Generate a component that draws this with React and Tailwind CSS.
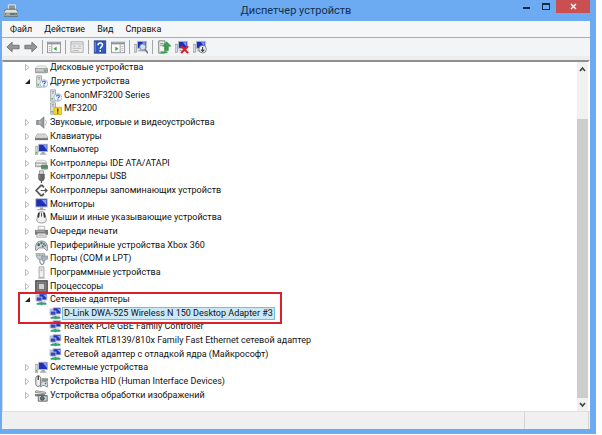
import React from "react";

function Icon({ children, className = "h-[13px] w-[13px]" }) {
  return (
    <svg viewBox="0 0 16 16" className={`${className} shrink-0`} fill="none" aria-hidden="true">
      {children}
    </svg>
  );
}

const Disk = () => (
  <Icon>
    <path d="M3 6h10l3 4H0z" fill="#f1f1f1" stroke="#aaa" strokeWidth=".7" />
    <rect x="0" y="9.500" width="15.500" height="5" rx="1" fill="#b9b9b9" stroke="#777" strokeWidth=".8" />
    <path d="M1.500 11h9" stroke="#eee" />
    <rect x="11.500" y="11.500" width="2.500" height="1.500" fill="#41a84c" />
  </Icon>
);
const Unknown = ({ warn }) => (
  <Icon>
    <path d="M2 1h6v14H2z" fill="#e2e4e4" stroke="#979d9d" />
    <path d="M3.500 3h3M3.500 5h3" stroke="#8a9190" />
    <rect x="3" y="11" width="2" height="2" fill="#58b063" />
    {warn ? (
      <path d="M6 6.500h9.500v9H6z" fill="#f6d62b" stroke="#b99a13" strokeWidth=".8" />
    ) : (
      <circle cx="11" cy="10.500" r="4.800" fill="#f2f6fd" stroke="#8b9fc4" strokeWidth=".8" />
    )}
    {warn ? (
      <path d="M10.800 8v4M10.800 13v1.500" stroke="#333" strokeWidth="1.500" />
    ) : (
      <path d="M9.300 9.200c0-2.400 3.600-2.300 3.400 0-.1 1.200-1.700 1.200-1.700 2.600M11 12.700v1.300" stroke="#2d58b5" strokeWidth="1.300" />
    )}
  </Icon>
);
const Speaker = () => (
  <Icon>
    <path d="M2 5.500h4L11 1v14l-5-4.500H2z" fill="#9a9da0" stroke="#66696c" strokeWidth=".8" />
    <path d="M6 5.500v5" stroke="#ddd" />
    <path d="M12.500 4.500c2 2 2 5 0 7" stroke="#aaa" />
  </Icon>
);
const Keyboard = () => (
  <Icon>
    <path d="M3 5h10l3 5H0z" fill="#ececec" stroke="#888" strokeWidth=".8" />
    <path d="M0 10h16v2.500H0z" fill="#777" />
    <path d="M3.500 6.500h9M2.500 8.200h11" stroke="#bbb" strokeDasharray="1.500 .6" />
  </Icon>
);
const Screen = ({ x = 4, y = 1, w = 11, h = 9 }) => (
  <>
    <rect x={x} y={y} width={w} height={h} fill="#1d30b8" stroke="#b9bccb" />
    <path d={`M${x + w / 2} ${y + 1}h${w / 2 - 1}v${h - 3}z`} fill="#7f9bf0" />
  </>
);
const Computer = () => (
  <Icon>
    <path d="M0 4h3.500v10H0z" fill="#d5d8d8" stroke="#858b8b" strokeWidth=".7" />
    <rect x="1" y="11" width="1.500" height="2" fill="#4eae58" />
    <Screen x={4.5} y={1.5} w={11} h={9} />
    <path d="M8 11h4v2h2v1.500H6V13h2z" fill="#a5a9b2" />
  </Icon>
);
const Ide = () => (
  <Icon>
    <path d="M3 4h9l3 3.500H0z" fill="#f1f1f1" stroke="#aaa" strokeWidth=".7" />
    <rect x="0" y="7.500" width="14" height="4.500" rx="1" fill="#c6c8c8" stroke="#7b7d7d" strokeWidth=".8" />
    <path d="M1.500 9h7" stroke="#fff" />
    <path d="M8 10.500h7.500v4H8z" fill="#4f8e6c" stroke="#37674c" strokeWidth=".7" />
    <path d="M9 15h6" stroke="#b8b27b" />
  </Icon>
);
const Usb = () => (
  <Icon>
    <path d="M5.500 1h5v4h-5z" fill="#ddd" stroke="#777" strokeWidth=".8" />
    <path d="M4 5h8v6l-2 2.500H6L4 11z" fill="#656565" />
    <path d="M8 13v3" stroke="#555" strokeWidth="1.600" />
    <path d="M6 6v4" stroke="#999" />
  </Icon>
);
const Storage = () => (
  <Icon>
    <path d="M8 1L1.500 8 8 15M8 1l3 3M8 15l3-3" stroke="#555" strokeWidth="2.200" />
    <path d="M7 8h8M12 5.500L15 8l-3 2.500" stroke="#555" strokeWidth="1.500" />
    <path d="M8 2.500L3 8l5 5.500" stroke="#bbb" strokeWidth=".7" />
  </Icon>
);
const Monitor = () => (
  <Icon>
    <Screen x={1} y={1} w={14} h={10} />
    <path d="M6 11.500h4v2h3V15H3v-1.500h3z" fill="#a5a9b2" />
  </Icon>
);
const Mouse = () => (
  <Icon>
    <path d="M4 3c2-3 6-3 8 0l2 8c0 5-12 5-12 0z" fill="#f0f0f0" stroke="#888" />
    <path d="M5 2l-1 6M11 2l1 6" stroke="#333" strokeWidth="2" />
    <path d="M8 2v5" stroke="#555" strokeWidth="1.200" />
  </Icon>
);
const Printer = () => (
  <Icon>
    <path d="M4 1.500h8V6H4z" fill="#f4f4f4" stroke="#999" strokeWidth=".8" />
    <path d="M0 6h16v6H0z" fill="#77797b" />
    <path d="M1 7.500h11" stroke="#ccc" />
    <path d="M3 10h10l1 5H2z" fill="#eee" stroke="#888" strokeWidth=".8" />
    <path d="M4.500 12.500h7" stroke="#999" />
  </Icon>
);
const Xbox = () => (
  <Icon>
    <path d="M3 4c3-2 7-2 10 0 2 1 3 8 2 10-1 1-3-2-4-3H5c-1 1-3 4-4 3S1 5 3 4z" fill="#d0d6d9" stroke="#6d787d" />
    <circle cx="4.500" cy="7" r="1.700" fill="#4d5a61" />
    <circle cx="8" cy="5" r="1.700" fill="#3f9b5d" />
    <circle cx="11" cy="6" r="1.200" fill="#3562bd" />
    <circle cx="12.500" cy="8" r="1.100" fill="#c34b3a" />
    <circle cx="9.500" cy="9" r="1.200" fill="#5e6b72" />
  </Icon>
);
const Port = () => (
  <Icon>
    <path d="M1 2h11v4l-2 3H4L2 6z" fill="#c3cdd1" stroke="#7d8a90" strokeWidth=".8" />
    <path d="M3 4h7" stroke="#66737a" strokeDasharray="1 1" />
    <path d="M8 5h8l-1 4h-2l-1 2H9z" fill="#a9b6bb" stroke="#7d8a90" strokeWidth=".8" />
    <path d="M6 9v3c0 2 2 2 2 4M11 11v2l-2 3" stroke="#859298" strokeWidth="1.500" />
  </Icon>
);
const Software = () => (
  <Icon>
    <path d="M5 1h6v13H5z" fill="#f0f1f1" stroke="#999" />
    <path d="M6.500 3.500h3M6.500 5.500h3" stroke="#aaa" />
    <path d="M3.500 15h9" stroke="#aaa" />
  </Icon>
);
const Cpu = () => (
  <Icon>
    <rect x="1" y="1" width="14" height="14" fill="#888" stroke="#444" strokeWidth="1.500" />
    <rect x="4" y="4" width="8" height="8" fill="#d0d0d0" stroke="#555" />
  </Icon>
);
const Network = () => (
  <Icon>
    <rect x="1" y="2" width="8" height="7" fill="#a8b7df" stroke="#dadde7" />
    <rect x="5" y="1" width="9.500" height="7.500" fill="#2234bd" stroke="#b3bad3" />
    <path d="M10 2h4v4z" fill="#8ba8f4" />
    <rect x="1.500" y="5" width="7" height="5" fill="#3348bd" stroke="#c5cbdf" />
    <path d="M4 10.500h9v2H4z" fill="#b0b7c4" />
    <path d="M2 13.500h12M8 11v4" stroke="#30a567" strokeWidth="2.200" />
  </Icon>
);
const Hid = () => (
  <Icon>
    <path d="M1 4c0-4 6-4 6 0v7c0 4-6 4-6 0z" fill="#eee" stroke="#555" />
    <path d="M4 1v5" stroke="#333" strokeWidth="1.500" />
    <path d="M8 4h8v4H8z" fill="#8d9396" />
    <path d="M7 10c2-3 7-3 9 0l-1 5-3-2H9l-2 2z" fill="#d5dbde" stroke="#6d787d" />
    <circle cx="13" cy="10.500" r="1" fill="#3562bd" />
  </Icon>
);
const Imaging = () => (
  <Icon>
    <path d="M1 2l12 2v2L0 4z" fill="#ddd" stroke="#666" strokeWidth=".8" />
    <path d="M0 6h12v3H0z" fill="#7b8181" />
    <path d="M4 8h11v7H4z" fill="#cdd2d2" stroke="#555" />
    <circle cx="9" cy="11.500" r="2.300" fill="#667b88" stroke="#333" />
    <path d="M12 8.500h2" stroke="#419a5d" strokeWidth="1.500" />
  </Icon>
);

const devices = [
  ["Дисковые устройства", Disk],
  ["Другие устройства", Unknown, "open"],
  ["CanonMF3200 Series", Unknown, "child"],
  ["MF3200", () => <Unknown warn />, "child"],
  ["Звуковые, игровые и видеоустройства", Speaker],
  ["Клавиатуры", Keyboard],
  ["Компьютер", Computer],
  ["Контроллеры IDE ATA/ATAPI", Ide],
  ["Контроллеры USB", Usb],
  ["Контроллеры запоминающих устройств", Storage],
  ["Мониторы", Monitor],
  ["Мыши и иные указывающие устройства", Mouse],
  ["Очереди печати", Printer],
  ["Периферийные устройства Xbox 360", Xbox],
  ["Порты (COM и LPT)", Port],
  ["Программные устройства", Software],
  ["Процессоры", Cpu],
  ["Сетевые адаптеры", Network, "open", "framed"],
  ["D-Link DWA-525 Wireless N 150 Desktop Adapter #3", Network, "child", "selected"],
  ["Realtek PCIe GBE Family Controller", Network, "child"],
  ["Realtek RTL8139/810x Family Fast Ethernet сетевой адаптер", Network, "child"],
  ["Сетевой адаптер с отладкой ядра (Майкрософт)", Network, "child"],
  ["Системные устройства", Computer],
  ["Устройства HID (Human Interface Devices)", Hid],
  ["Устройства обработки изображений", Imaging],
];

function DeviceRow({ name, Glyph, kind, mark }) {
  const child = kind === "child";
  return (
    <li role="treeitem" aria-level={child ? 2 : 1} aria-selected={mark === "selected"} className={`relative flex items-center ${child ? "pl-[45px]" : "pl-[20px]"}`}>
      {!child && (
        <button type="button" aria-label={name} className="flex w-[11px] shrink-0">
          <svg viewBox="0 0 7 7" className="h-[7px] w-[7px]" aria-hidden="true">
            {kind === "open" ? <path d="M6 1v5H1z" fill="#222" /> : <path d="M1.500 .5L5 3.500 1.500 6.500z" fill="#fff" stroke="#aaa" strokeWidth=".8" />}
          </svg>
        </button>
      )}
      <Glyph />
      <span className={`flex h-[13px] items-center whitespace-nowrap border px-px leading-none ${mark === "selected" ? "border-[#78bce0] bg-[#cbe8f6]" : "border-transparent"}`}>{name}</span>
      {mark === "framed" && <span className="pointer-events-none absolute -top-px left-[14px] z-10 h-[32px] w-[264px] border-2 border-[#d9202c]" />}
    </li>
  );
}

function Tool({ label, children }) {
  return (
    <button type="button" aria-label={label} className="flex w-[14px] items-center justify-center">
      <Icon className="h-[14px] w-[14px]">{children}</Icon>
    </button>
  );
}
const Divider = () => <span className="h-[14px] w-px bg-[#a5a5a5]" />;

const Pane = ({ flip }) => (
  <>
    <rect x=".5" y="2.500" width="15" height="12" fill="#fafafa" stroke="#8b8f94" />
    <path d="M1 4h14" stroke="#8c949e" strokeWidth="2" />
    <path d={flip ? "M10.500 5v9" : "M5.500 5v9"} stroke="#999" />
    <path d={flip ? "M5 7.500v5l3.500-2.500z" : "M11 7.500v5L7.500 10z"} fill="#3fa34a" />
    <path d={flip ? "M12 7.500h2M12 10h2M12 12h2" : "M2 7.500h2M2 10h2M2 12h2"} stroke="#aaa" />
  </>
);
const Device = () => (
  <>
    <path d="M0 5h3v9H0z" fill="#d5d8d8" stroke="#888" strokeWidth=".7" />
    <Screen x={4} y={1.5} w={10} h={8} />
    <path d="M5 11h8v2H5z" fill="#aaadb6" />
  </>
);

export default function App() {
  return (
    <div className="h-screen bg-white pr-[6px] pb-px font-[Roboto,'Noto_Sans',sans-serif] text-[9px] leading-none text-[#111]">
      <div className="flex h-full flex-col bg-[#6cabf2] pr-[6px] pb-[5px] pl-[2px]">
        <header className="grid h-[21px] shrink-0 grid-cols-[1fr_auto_1fr] items-center">
          <Icon className="ml-[2px] h-[14px] w-[14px]">
            <path d="M5 1h8v6H5z" fill="#8a969c" stroke="#f0f0f0" />
            <path d="M0 8l3-2h10l3 2v6H0z" fill="#dfe2df" stroke="#555f63" />
            <path d="M1 10h14v3H1z" fill="#68716f" />
            <path d="M2 11.500h5" stroke="#eee" />
            <path d="M12 11.500h2" stroke="#5fc36b" />
          </Icon>
          <h1 className="text-[11px] text-[#14304f]">Диспетчер устройств</h1>
          <div className="flex h-full items-start justify-end">
            <button type="button" aria-label="Свернуть" className="flex h-[13px] w-[20px] items-center justify-center">
              <span className="mt-[3px] h-[2px] w-[7px] bg-[#142a45]" />
            </button>
            <button type="button" aria-label="Развернуть" className="flex h-[13px] w-[20px] items-center justify-center">
              <span className="h-[7px] w-[8px] border border-t-2 border-[#142a45]" />
            </button>
            <button type="button" aria-label="Закрыть" className="flex h-[13px] w-[34px] items-center justify-center bg-[#c94f50]">
              <svg viewBox="0 0 7 7" className="h-[7px] w-[7px]" aria-hidden="true">
                <path d="M1 1l5 5M6 1L1 6" stroke="#fff" strokeWidth="1.400" />
              </svg>
            </button>
          </div>
        </header>

        <nav className="flex h-[17px] shrink-0 items-center gap-[12px] border-b border-[#aaacae] bg-[#f5f6f8] pl-[8px]">
          <button type="button">Файл</button>
          <button type="button">Действие</button>
          <button type="button">Вид</button>
          <button type="button">Справка</button>
        </nav>

        <div role="toolbar" className="flex h-[22px] shrink-0 items-center gap-[4px] border-b-4 border-[#ededed] bg-[#f3f4f6] pl-[4px]">
          <Tool label="Назад"><path d="M1 8l6-5.500V6h8v4H7v3.500z" fill="#969696" stroke="#707070" /></Tool>
          <Tool label="Вперед"><path d="M15 8L9 2.500V6H1v4h8v3.500z" fill="#969696" stroke="#707070" /></Tool>
          <Divider />
          <Tool label="Дерево консоли"><Pane /></Tool>
          <Divider />
          <Tool label="Свойства">
            <path d="M1 2h14v12H1z" fill="#eee" stroke="#a5a5a5" />
            <path d="M1 4.500h14M3 7h4M9 7h4M3 9.500h10M3 12h7" stroke="#b5b5b5" />
          </Tool>
          <Divider />
          <Tool label="Справка">
            <rect x="1.500" y="1" width="13" height="14" fill="#3158bd" stroke="#263f87" />
            <path d="M2.500 2v12" stroke="#839ee0" />
            <path d="M5.800 6c0-3.500 5-3.200 5-.3C10.800 8 8.300 7.700 8.300 10M8.300 11.500v2" stroke="#fff" strokeWidth="1.700" />
          </Tool>
          <Tool label="Панель действий"><Pane flip /></Tool>
          <Divider />
          <Tool label="Обновить конфигурацию">
            <Device />
            <circle cx="10" cy="8" r="3.500" fill="#cfe2f3" stroke="#778797" />
            <path d="M12.500 10.500L16 15" stroke="#777" strokeWidth="2" />
          </Tool>
          <Divider />
          <Tool label="Обновить драйверы">
            <path d="M2 1h7v14H2z" fill="#f2f2f2" stroke="#6b7370" />
            <path d="M3.500 4h4M3.500 6h4" stroke="#7d8682" />
            <path d="M4 14h8" stroke="#3d9b4b" strokeWidth="2" />
            <path d="M11 2l5 5h-3v5H9V7H6.500z" fill="#37a34c" stroke="#25803a" strokeWidth=".6" />
          </Tool>
          <Tool label="Удалить">
            <Device />
            <path d="M7 7l8 8M15 7l-8 8" stroke="#d82027" strokeWidth="2.400" />
          </Tool>
          <Tool label="Отключить">
            <Device />
            <circle cx="11" cy="10.500" r="4.300" fill="#f5f5f5" stroke="#777" />
            <path d="M11 8v5M9 11l2 2 2-2" stroke="#444" strokeWidth="1.300" />
          </Tool>
        </div>

        <main className="flex min-h-0 flex-1 border-t-2 border-r-2 border-l border-t-[#909090] border-r-white border-l-[#d3d9e0] bg-white">
          <ul role="tree" aria-label="Устройства" className="-mt-px grid h-[341px] flex-1 auto-rows-fr pl-px">
            {devices.map(([name, Glyph, kind, mark]) => (
              <DeviceRow key={name} name={name} Glyph={Glyph} kind={kind} mark={mark} />
            ))}
          </ul>
          <div className="flex w-[11px] shrink-0 flex-col bg-[#f1f1f1]">
            <button type="button" aria-label="Вверх" className="flex h-[13px] items-center justify-center">
              <svg viewBox="0 0 7 6" className="h-[6px] w-[7px]" fill="none" aria-hidden="true"><path d="M1 5l2.500-3L6 5" stroke="#444" strokeWidth="1.700" /></svg>
            </button>
            <div className="flex min-h-0 flex-1 flex-col pt-[44px]">
              <div className="flex-1 bg-[#cdcdcd]" />
            </div>
            <button type="button" aria-label="Вниз" className="flex h-[13px] items-center justify-center">
              <svg viewBox="0 0 7 6" className="h-[6px] w-[7px]" fill="none" aria-hidden="true"><path d="M1 1l2.500 3L6 1" stroke="#444" strokeWidth="1.700" /></svg>
            </button>
          </div>
        </main>

        <footer className="flex h-[18px] shrink-0 border-t border-[#dedede] bg-[#f0f0f0] pr-px">
          <div className="flex-1 border-r border-[#d5d5d5]" />
          <div className="w-[64px] border-r border-[#d5d5d5]" />
        </footer>
      </div>
    </div>
  );
}
